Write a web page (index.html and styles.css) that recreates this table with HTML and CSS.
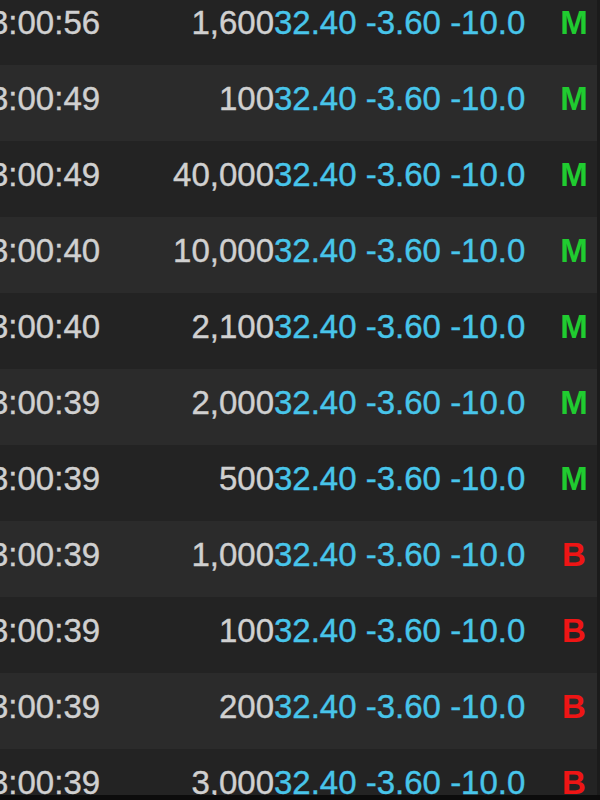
FILE: index.html
```html
<!DOCTYPE html>
<html>
<head>
  <title>Time and Sales</title>
  <meta charset="UTF-8">
  <meta name="viewport" content="width=device-width, initial-scale=1.0">
  <link rel="stylesheet" href="styles.css">
</head>
<body>

  <div class="tape">
    <div class="trade">
      <span class="time">3:00:56</span>
      <span class="qty">1,600</span>
      <span class="price">32.40 -3.60 -10.0</span>
      <span class="side mid">M</span>
    </div>
    <div class="trade">
      <span class="time">3:00:49</span>
      <span class="qty">100</span>
      <span class="price">32.40 -3.60 -10.0</span>
      <span class="side mid">M</span>
    </div>
    <div class="trade">
      <span class="time">3:00:49</span>
      <span class="qty">40,000</span>
      <span class="price">32.40 -3.60 -10.0</span>
      <span class="side mid">M</span>
    </div>
    <div class="trade">
      <span class="time">3:00:40</span>
      <span class="qty">10,000</span>
      <span class="price">32.40 -3.60 -10.0</span>
      <span class="side mid">M</span>
    </div>
    <div class="trade">
      <span class="time">3:00:40</span>
      <span class="qty">2,100</span>
      <span class="price">32.40 -3.60 -10.0</span>
      <span class="side mid">M</span>
    </div>
    <div class="trade">
      <span class="time">3:00:39</span>
      <span class="qty">2,000</span>
      <span class="price">32.40 -3.60 -10.0</span>
      <span class="side mid">M</span>
    </div>
    <div class="trade">
      <span class="time">3:00:39</span>
      <span class="qty">500</span>
      <span class="price">32.40 -3.60 -10.0</span>
      <span class="side mid">M</span>
    </div>
    <div class="trade">
      <span class="time">3:00:39</span>
      <span class="qty">1,000</span>
      <span class="price">32.40 -3.60 -10.0</span>
      <span class="side bid">B</span>
    </div>
    <div class="trade">
      <span class="time">3:00:39</span>
      <span class="qty">100</span>
      <span class="price">32.40 -3.60 -10.0</span>
      <span class="side bid">B</span>
    </div>
    <div class="trade">
      <span class="time">3:00:39</span>
      <span class="qty">200</span>
      <span class="price">32.40 -3.60 -10.0</span>
      <span class="side bid">B</span>
    </div>
    <div class="trade">
      <span class="time">3:00:39</span>
      <span class="qty">3,000</span>
      <span class="price">32.40 -3.60 -10.0</span>
      <span class="side bid">B</span>
    </div>
  </div>

  <div class="statusbar"></div>

</body>
</html>
```

FILE: styles.css
```css
/* Reset */
* {
  margin: 0;
  padding: 0;
  box-sizing: border-box;
}

html, body {
  height: 100%;
  overflow: hidden;
}

body {
  font-family: 'Liberation Sans', Arial, sans-serif;
  background-color: #111;
  color: #d0d0d0;
  font-size: 33px;
  -webkit-text-stroke: 0.4px;
}

/* Trade tape */
.tape {
  height: 795px;
  overflow: hidden;
  border-right: 3px solid #1b1b1b;
}

.tape .trade:first-child {
  margin-top: -11px;
}

.trade {
  display: flex;
  height: 76px;
  line-height: 68px;
  padding-bottom: 8px;
  white-space: nowrap;
  background-color: #232323;
}

.trade:nth-child(even) {
  background-color: #2b2b2b;
}

.time {
  width: 120px;
  margin-left: -10px;
  flex-shrink: 0;
}

.qty {
  width: 164px;
  flex-shrink: 0;
  text-align: right;
}

.price {
  width: 272px;
  flex-shrink: 0;
  color: #48c5ea;
}

.side {
  width: 56px;
  flex-shrink: 0;
  text-align: center;
  font-weight: 700;
  -webkit-text-stroke: 0;
}

.side.mid {
  color: #20cc30;
}

.side.bid {
  color: #ee1515;
}

/* Bottom edge */
.statusbar {
  height: 5px;
  background-color: #0c0c0c;
}
```
